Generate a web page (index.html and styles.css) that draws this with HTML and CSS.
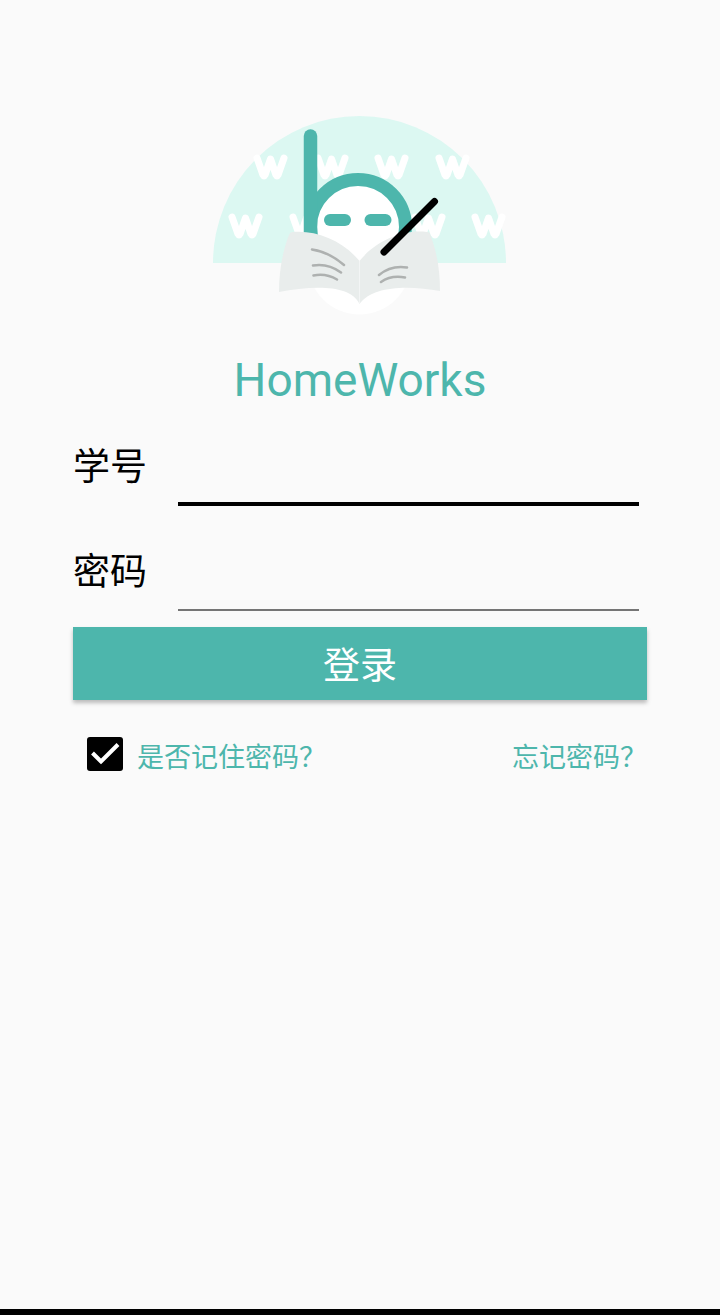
FILE: index.html
```html
<!DOCTYPE html>
<html lang="zh-CN">
<head>
<meta charset="utf-8">
<meta name="viewport" content="width=device-width, initial-scale=1">
<title>HomeWorks</title>
<link rel="stylesheet" href="styles.css">
</head>
<body>
<main class="login">
  <svg class="logo" viewBox="200 105 320 220" role="img" aria-label="HomeWorks">
    <defs>
      <path id="mark" d="M4 4 10 21Q11 23 12 21L17.500 5 23 21Q24 23 25 21L31 4"/>
    </defs>
    <path fill="#dcf8f2" d="M213 263a146.500 147 0 0 1 293 0z"/>
    <g fill="none" stroke="#fff" stroke-width="7" stroke-linecap="round" stroke-linejoin="round">
      <use href="#mark" x="253" y="154"/>
      <use href="#mark" x="314" y="154"/>
      <use href="#mark" x="374" y="154"/>
      <use href="#mark" x="435" y="154"/>
      <use href="#mark" x="228" y="213"/>
      <use href="#mark" x="289" y="213"/>
      <use href="#mark" x="411" y="213"/>
      <use href="#mark" x="471" y="213"/>
    </g>
    <circle cx="359.500" cy="263" r="51.500" fill="#fff"/>
    <circle cx="358" cy="227" r="47.500" fill="#fff" stroke="#4db6ac" stroke-width="13"/>
    <path d="M310.500 136V240" stroke="#4db6ac" stroke-width="13.500" stroke-linecap="round"/>
    <rect x="324" y="214" width="27" height="12" rx="6" fill="#4db6ac"/>
    <rect x="364.500" y="214" width="27" height="12" rx="6" fill="#4db6ac"/>
    <path fill="#fff" d="M318 240h80v40h-80z"/>
    <path fill="#e9edec" d="M293 232C316 230 342 240 359.500 261V304C350 284 312 286 279 292 279 270 283 250 289 235Q290 232 293 232z"/>
    <path fill="#e9edec" d="M359.500 261C374 243 400 229 427 232 429 232 430 233 430 234 437 252 440 270 440 291 408 285 372 286 359.500 304z"/>
    <path d="M359.500 261V304" stroke="#f3f5f5"/>
    <g fill="none" stroke="#aeb1b0" stroke-width="2.500" stroke-linecap="round">
      <path d="M312 249.500Q329 252 344 265M313 265.500Q328 263 341 272.500M313.500 275.500Q326 273 337 279.500M379 275Q391 265 407 267.500M381 282Q391 275 405 277.500"/>
    </g>
    <path d="M384 252 434.500 201.500" stroke="#000" stroke-width="7" stroke-linecap="round"/>
  </svg>
  <h1 class="title">HomeWorks</h1>
  <form class="form">
    <div class="field">
      <label class="label" for="account">学号</label>
      <input class="input input-active" id="account" type="text">
    </div>
    <div class="field">
      <label class="label" for="password">密码</label>
      <input class="input" id="password" type="password">
    </div>
    <button class="submit" type="button">登录</button>
    <div class="options">
      <label class="remember" for="remember">
        <span class="tick">
          <input class="checkbox" id="remember" type="checkbox" checked>
          <svg class="check" viewBox="0 0 36 34" aria-hidden="true"><path d="M5.500 16 14 24.500 31 7.500" fill="none" stroke="#fff" stroke-width="4"/></svg>
        </span>
        <span class="option-text">是否记住密码？</span>
      </label>
      <a class="forgot option-text" href="#">忘记密码？</a>
    </div>
  </form>
</main>
</body>
</html>
```
FILE: styles.css
```css
* {
  box-sizing: border-box;
}

body {
  margin: 0;
  min-height: 100vh;
  background: #fafafa;
  border-bottom: 6px solid #000;
  color: #000;
  font-family: Roboto, "Noto Sans CJK SC", sans-serif;
}

.login {
  display: flex;
  flex-direction: column;
  align-items: center;
  padding: 105px 73px 0;
}

.logo {
  display: block;
  width: 320px;
  height: 220px;
}

.title {
  margin: 28px 0 0;
  color: #4db6ac;
  font-size: 46px;
  font-weight: 400;
  line-height: 54px;
}

.form {
  width: 100%;
  margin-top: 27px;
}

.field {
  display: flex;
  align-items: flex-end;
  gap: 31px;
  padding-right: 8px;
}

.field + .field {
  margin-top: 33px;
}

.label {
  flex: none;
  padding-bottom: 11px;
  font-size: 37px;
  line-height: 54px;
}

.input {
  flex: 1;
  min-width: 0;
  height: 72px;
  padding: 0;
  border: 0;
  border-bottom: 2px solid #757575;
  border-radius: 0;
  outline: 0;
  background: transparent;
  font: inherit;
  font-size: 37px;
}

.input-active {
  border-bottom: 4px solid #000;
}

.submit {
  display: block;
  width: 100%;
  height: 73px;
  margin-top: 16px;
  padding: 6px 0 0;
  border: 0;
  background: #4db6ac;
  box-shadow: 0 3px 4px rgba(0, 0, 0, 0.25);
  color: #fff;
  font: inherit;
  font-size: 37px;
  line-height: 54px;
}

.options {
  display: flex;
  justify-content: space-between;
  align-items: center;
  margin-top: 32px;
  padding-left: 14px;
  color: #4db6ac;
  font-size: 27px;
  line-height: 36px;
}

.remember {
  display: flex;
  align-items: center;
  gap: 14px;
}

.option-text {
  padding-top: 8px;
}

.tick {
  display: grid;
  width: 36px;
  height: 34px;
}

.checkbox,
.check {
  grid-area: 1 / 1;
  width: 36px;
  height: 34px;
  margin: 0;
}

.checkbox {
  appearance: none;
  border-radius: 3px;
  background: #000;
}

.check {
  pointer-events: none;
  visibility: hidden;
}

.checkbox:checked + .check {
  visibility: visible;
}

.forgot {
  color: inherit;
  text-decoration: none;
}
```
